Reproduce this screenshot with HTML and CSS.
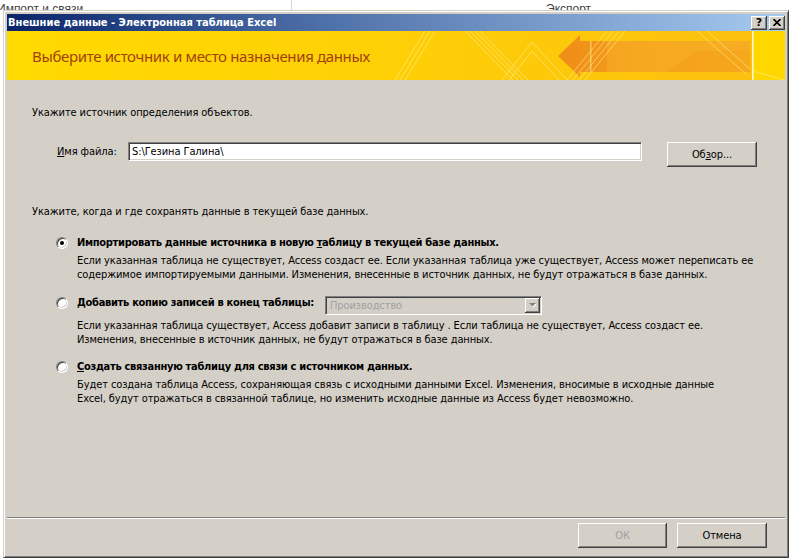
FILE: index.html
```html
<!DOCTYPE html>
<html lang="ru">
<head>
    <meta charset="UTF-8">
    <title>Внешние данные - Электронная таблица Excel</title>
    <link rel="stylesheet" href="styles.css">
</head>
<body>

<div class="backdrop">
    <span class="tab tab-import">Импорт и связи</span>
    <span class="tab tab-export">Экспорт</span>
</div>

<div class="dialog">
    <div class="titlebar">
        <span class="title">Внешние данные - Электронная таблица Excel</span>
        <div class="title-buttons">
            <span class="tbtn">?</span>
            <span class="tbtn">
                <svg width="8" height="7" viewBox="0 0 8 7"><path d="M0.5 0 L7.5 7 M7.5 0 L0.5 7" stroke="#000" stroke-width="1.6"/></svg>
            </span>
        </div>
    </div>

    <div class="banner">
        <svg class="banner-art" width="778" height="49" viewBox="0 0 778 49">
            <defs>
                <linearGradient id="bg" x1="0" y1="0" x2="1" y2="0">
                    <stop offset="0" stop-color="#ffda00"/>
                    <stop offset="0.5" stop-color="#fed006"/>
                    <stop offset="1" stop-color="#fbc00e"/>
                </linearGradient>
                <linearGradient id="arrow" x1="0" y1="0" x2="1" y2="0">
                    <stop offset="0" stop-color="#f08c18"/>
                    <stop offset="0.4" stop-color="#f49e1c"/>
                    <stop offset="1" stop-color="#f6a81c"/>
                </linearGradient>
            </defs>
            <rect width="745" height="49" fill="url(#bg)"/>
            <rect x="746" width="32" height="49" fill="#ffd800"/>
            <rect x="745" width="1.5" height="49" fill="#fff8d8"/>
            <!-- big arrow pointing left -->
            <polygon points="551,25 573,4 573,10 743,10 743,41 573,41 573,46" fill="url(#arrow)"/>
            <polygon points="600,10 743,10 743,20 690,20 660,41 600,41" fill="#f8b428" opacity="0.45"/>
            <rect x="583" y="10" width="1.5" height="31" fill="#fcd060" opacity="0.8"/>
            <!-- light stripes -->
            <g stroke="#fff3a0" stroke-width="1" opacity="0.55" fill="none">
                <path d="M388 49 L418 0 M393 49 L423 0 M398 49 L428 0"/>
                <path d="M458 0 L506 49 M463 0 L511 49 M468 0 L516 49 M473 0 L521 49"/>
                <path d="M495 49 L525 11 L560 49 M502 49 L525 20 L552 49"/>
                <path d="M560 49 L600 0 M566 49 L606 0 M572 49 L612 0 M578 49 L618 0"/>
                <path d="M690 0 L740 44 M700 0 L743 38"/>
                <path d="M745 40 L778 49"/>
            </g>
        </svg>
        <h1>Выберите источник и место назначения данных</h1>
    </div>

    <div class="content">
        <p class="hint">Укажите источник определения объектов.</p>

        <div class="file-row">
            <label class="file-label" for="fileName"><u>И</u>мя файла:</label>
            <div class="text-input" id="fileName">S:\Гезина Галина\</div>
            <span class="btn browse">Об<u>з</u>ор...</span>
        </div>

        <p class="hint hint-save">Укажите, когда и где сохранять данные в текущей базе данных.</p>

        <div class="option option-first">
            <div class="option-head">
                <span class="radio checked"></span>
                <span class="option-title">Импортировать данные источника в новую <u>т</u>аблицу в текущей базе данных.</span>
            </div>
            <p class="option-desc">Если указанная таблица не существует, Access создаст ее. Если указанная таблица уже существует, Access может переписать ее<br>содержимое импортируемыми данными. Изменения, внесенные в источник данных, не будут отражаться в базе данных.</p>
        </div>

        <div class="option option-append">
            <div class="option-head">
                <span class="radio"></span>
                <span class="option-title"><u>Д</u>обавить копию записей в конец таблицы:</span>
                <div class="select disabled">
                    <span class="select-value">Производство</span>
                    <span class="select-arrow">
                        <svg width="7" height="5" viewBox="0 0 7 5"><polygon points="1,1 8,1 4.5,4.5" fill="#fff"/><polygon points="0,0 7,0 3.5,3.5" fill="#808080"/></svg>
                    </span>
                </div>
            </div>
            <p class="option-desc">Если указанная таблица существует, Access добавит записи в таблицу . Если таблица не существует, Access создаст ее.<br>Изменения, внесенные в источник данных, не будут отражаться в базе данных.</p>
        </div>

        <div class="option option-link">
            <div class="option-head">
                <span class="radio"></span>
                <span class="option-title"><u>С</u>оздать связанную таблицу для связи с источником данных.</span>
            </div>
            <p class="option-desc">Будет создана таблица Access, сохраняющая связь с исходными данными Excel. Изменения, вносимые в исходные данные<br>Excel, будут отражаться в связанной таблице, но изменить исходные данные из Access будет невозможно.</p>
        </div>
    </div>

    <div class="footer">
        <span class="btn disabled">ОК</span>
        <span class="btn">Отмена</span>
    </div>
</div>

</body>
</html>
```

FILE: styles.css
```css
body {
    margin: 0;
    width: 791px;
    height: 560px;
    overflow: hidden;
    background-color: #ffffff;
    font-family: "DejaVu Sans Condensed", "DejaVu Sans", sans-serif;
    font-size: 11px;
    line-height: 14px;
    letter-spacing: -0.1px;
    color: #000;
}
p {
    margin: 0;
}
.backdrop {
    display: flex;
    height: 10px;
    overflow: hidden;
    font: 12px/16px "Liberation Sans", sans-serif;
    letter-spacing: 0;
    color: #444;
}
.tab {
    padding-top: 1px;
}
.tab-import {
    width: 291px;
    text-indent: -3px;
    border-right: 1px solid #d6d6d6;
}
.tab-export {
    padding-left: 254px;
}
.dialog {
    margin-left: 3px;
    width: 786px;
    height: 548px;
    box-sizing: border-box;
    padding: 3px;
    background-color: #d4d0c8;
    border: 1px solid;
    border-color: #d4d0c8 #404040 #404040 #d4d0c8;
    box-shadow: inset 1px 1px #ffffff, inset -1px -1px #808080;
    display: flex;
    flex-direction: column;
}
.titlebar {
    height: 17px;
    flex-shrink: 0;
    display: flex;
    align-items: center;
    justify-content: space-between;
    padding-left: 1px;
    background: linear-gradient(to right, #0a246a, #4d6fa8 40%, #a6caf0);
}
.title {
    color: #fff;
    font-weight: bold;
    font-size: 11px;
    letter-spacing: 0;
}
.title-buttons {
    display: flex;
    gap: 2px;
}
.tbtn {
    width: 16px;
    height: 14px;
    box-sizing: border-box;
    display: flex;
    align-items: center;
    justify-content: center;
    background-color: #d4d0c8;
    box-shadow: inset -1px -1px #404040, inset 1px 1px #ffffff, inset -2px -2px #808080;
    font: bold 11px/1 "DejaVu Sans", sans-serif;
}
.banner {
    position: relative;
    height: 49px;
    flex-shrink: 0;
    overflow: hidden;
    background-color: #ffd800;
}
.banner-art {
    position: absolute;
    left: 0;
    top: 0;
}
.banner h1 {
    position: relative;
    margin: 0;
    padding: 2px 0 0 25px;
    font-family: "Noto Sans", sans-serif;
    font-weight: normal;
    font-size: 15px;
    line-height: 47px;
    letter-spacing: -0.35px;
    color: #a1420b;
}
.content {
    flex: 1;
    padding-left: 25px;
}
.hint {
    margin-top: 26px;
}
.hint-save {
    margin-top: 38px;
}
.file-row {
    display: flex;
    align-items: flex-start;
    margin: 22px 0 0 25px;
}
.file-label {
    width: 71px;
    line-height: 19px;
}
.text-input {
    width: 514px;
    height: 19px;
    box-sizing: border-box;
    padding: 0 3px;
    line-height: 17px;
    background-color: #fff;
    border: 1px solid;
    border-color: #808080 #ffffff #ffffff #808080;
    box-shadow: inset 1px 1px #404040, inset -1px -1px #d4d0c8;
}
.btn {
    display: flex;
    align-items: center;
    justify-content: center;
    width: 90px;
    height: 25px;
    box-sizing: border-box;
    background-color: #d4d0c8;
    box-shadow: inset -1px -1px #404040, inset 1px 1px #ffffff, inset -2px -2px #808080;
}
.btn.disabled {
    width: 89px;
    color: #a0a0a0;
}
.browse {
    margin-left: 25px;
}
.option {
    margin-left: 24px;
}
.option-first {
    margin-top: 17px;
}
.option-append {
    margin-top: 14px;
}
.option-link {
    margin-top: 13px;
}
.option-head {
    display: flex;
    align-items: flex-start;
}
.option-title {
    font-weight: bold;
    letter-spacing: -0.3px;
}
.radio {
    position: relative;
    flex-shrink: 0;
    width: 12px;
    height: 12px;
    box-sizing: border-box;
    margin: 1px 9px 0 0;
    border-radius: 50%;
    background-color: #fff;
    border: 1px solid;
    border-color: #808080 #ffffff #ffffff #808080;
    box-shadow: inset 1px 1px #404040, inset -1px -1px #d4d0c8;
}
.radio.checked::after {
    content: "";
    position: absolute;
    left: 3px;
    top: 3px;
    width: 4px;
    height: 4px;
    border-radius: 50%;
    background-color: #000;
}
.option-desc {
    margin: 4px 0 0 21px;
}
.select {
    display: flex;
    align-items: center;
    justify-content: space-between;
    width: 217px;
    height: 19px;
    box-sizing: border-box;
    margin-left: 11px;
    padding: 2px 2px 2px 4px;
    background-color: #d4d0c8;
    border: 1px solid;
    border-color: #808080 #ffffff #ffffff #808080;
    box-shadow: inset 1px 1px #404040, inset -1px -1px #d4d0c8;
}
.select.disabled .select-value {
    color: #a0a0a0;
}
.select-arrow {
    display: flex;
    align-items: center;
    justify-content: center;
    width: 15px;
    height: 15px;
    box-sizing: border-box;
    margin-right: -1px;
    background-color: #d4d0c8;
    box-shadow: inset -1px -1px #404040, inset 1px 1px #ffffff, inset -2px -2px #808080;
}
.footer {
    flex-shrink: 0;
    display: flex;
    justify-content: flex-end;
    gap: 10px;
    padding: 5px 18px 6px 0;
    border-top: 1px solid #808080;
    box-shadow: inset 0 1px #ffffff;
}
```
